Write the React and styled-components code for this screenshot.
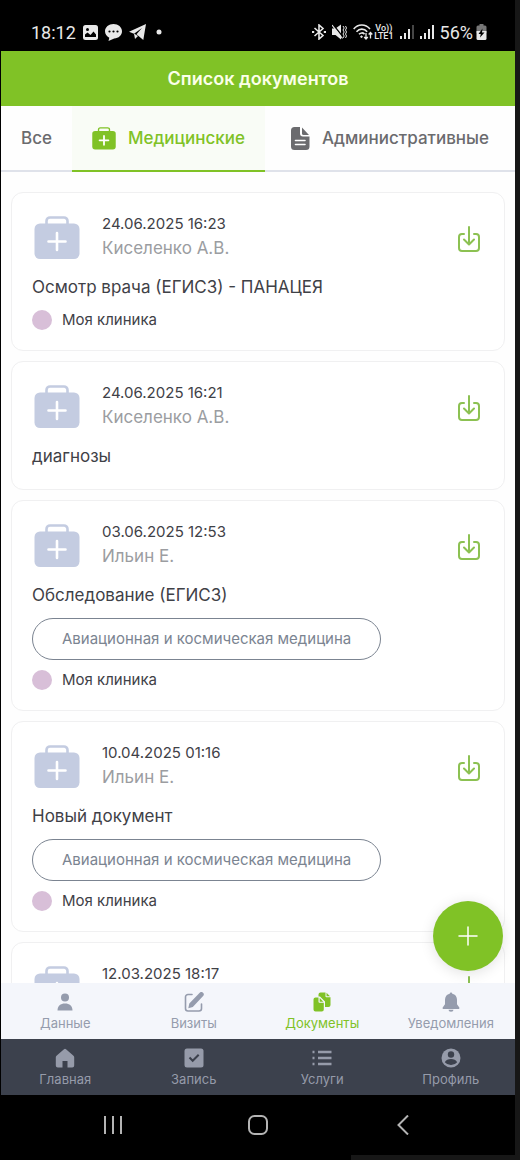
import React, { useState } from 'react'
import styled, { createGlobalStyle, ThemeProvider } from 'styled-components'

const theme = {
  colors: {
    green: '#80c226',
    ink: '#3f4147',
    grey: '#6b6b6e',
    muted: '#9b9da1',
    slate: '#7b8491',
    icon: '#c4cce1',
    line: '#f0f0f1',
    dark: '#3c414d',
    pale: '#f4f6fb',
  },
  font: "Inter, 'Liberation Sans', sans-serif",
}

const GlobalStyle = createGlobalStyle`
  * {
    box-sizing: border-box;
  }

  body {
    margin: 0;
    background: #171717;
    font-family: ${theme.font};
    color: ${theme.colors.ink};
  }

  button {
    font: inherit;
    color: inherit;
    background: none;
    border: 0;
    padding: 0;
    cursor: pointer;
  }

  svg {
    display: block;
    flex: none;
  }
`

const Screen = styled.div`
  display: flex;
  flex-direction: column;
  height: 100vh;
  margin-right: 5px;
  border-left: 1px solid #000;
  background: #fefefe;
`

const StatusBar = styled.div`
  display: flex;
  align-items: center;
  justify-content: space-between;
  flex: none;
  height: 51px;
  padding: 13px 28px 0 30px;
  background: #000;
  color: #e8e8e8;
  font-family: Roboto, sans-serif;
  font-size: 18px;
`

const StatusGroup = styled.div`
  display: flex;
  align-items: center;
  gap: ${({ $gap }) => $gap}px;
`

const Volte = styled.span`
  display: flex;
  flex-direction: column;
  align-items: center;
  font-size: 9px;
  font-weight: 500;
  line-height: 8px;
`

const Header = styled.header`
  display: flex;
  align-items: center;
  justify-content: center;
  flex: none;
  height: 55px;
  background: ${({ theme }) => theme.colors.green};
  color: #fbffe9;
`

const Title = styled.h1`
  margin: 0;
  font-size: 18px;
  font-weight: 600;
`

const Tabs = styled.div`
  display: flex;
  flex: none;
  height: 66px;
`

const Tab = styled.button`
  && {
    display: flex;
    align-items: center;
    justify-content: center;
    gap: 12px;
    padding: 0 20px;
    border-bottom: 2px solid ${({ $active, theme }) => ($active ? theme.colors.green : '#dfe2ea')};
    background: ${({ $active }) => ($active ? '#f9fcf6' : 'transparent')};
    color: ${({ $active, theme }) => ($active ? theme.colors.green : theme.colors.grey)};
    font-size: 17px;
    font-weight: 500;
    white-space: nowrap;
  }

  &&:last-child {
    flex: 1;
  }
`

const Content = styled.main`
  position: relative;
  flex: 1;
  min-height: 0;
`

const List = styled.div`
  display: flex;
  flex-direction: column;
  gap: 10px;
  height: 100%;
  padding: 20px 10px;
  overflow-y: auto;
  scrollbar-width: none;
`

const Card = styled.article`
  flex: none;
  padding: 19px 20px 20px;
  border: 1px solid ${({ theme }) => theme.colors.line};
  border-radius: 12px;
  background: #fff;
`

const CardHead = styled.div`
  display: flex;
  align-items: flex-end;
  gap: 22px;
  padding: 0 4px 0 2px;
`

const CardInfo = styled.div`
  flex: 1;
  min-height: 48px;
  font-size: 15px;
  line-height: 24px;
`

const Doctor = styled.div`
  color: ${({ theme }) => theme.colors.muted};
  font-size: 17px;
`

const DownloadButton = styled.button`
  && {
    padding-bottom: 8px;
  }
`

const CardTitle = styled.h2`
  margin: 14px 0 0;
  font-size: 17px;
  font-weight: 400;
  line-height: 26px;
`

const Tag = styled.div`
  width: fit-content;
  margin-top: 10px;
  padding: 0 29px;
  border: 1px solid ${({ theme }) => theme.colors.slate};
  border-radius: 21px;
  color: ${({ theme }) => theme.colors.slate};
  font-size: 15px;
  line-height: 40px;
`

const Clinic = styled.div`
  display: flex;
  align-items: center;
  gap: 10px;
  margin-top: 10px;
  font-size: 15px;
  line-height: 20px;

  &::before {
    content: '';
    width: 20px;
    height: 20px;
    border-radius: 50%;
    background: #d8bfd8;
  }
`

const Fab = styled.button`
  && {
    position: absolute;
    right: 12px;
    bottom: 12px;
    display: flex;
    align-items: center;
    justify-content: center;
    width: 70px;
    height: 70px;
    border-radius: 50%;
    background: ${({ theme }) => theme.colors.green};
    box-shadow: 0 2px 14px rgba(0, 0, 0, 0.12);
    color: #fff;
  }
`

const Nav = styled.nav`
  display: grid;
  grid-template-columns: repeat(4, 1fr);
  flex: none;
  height: 56px;
  background: ${({ $dark, theme }) => ($dark ? theme.colors.dark : theme.colors.pale)};
`

const NavItem = styled.a`
  display: flex;
  flex-direction: column;
  align-items: center;
  justify-content: center;
  gap: 3px;
  color: ${({ $active, $dark, theme }) =>
    $active ? theme.colors.green : $dark ? '#969baa' : '#959cad'};
  font-size: 13px;
  line-height: 16px;
  text-decoration: none;
`

const SystemBar = styled.div`
  display: flex;
  align-items: center;
  justify-content: space-around;
  flex: none;
  height: 60px;
  padding: 0 40px;
  background: #000;
  color: #b4b4b4;
`

const BottomEdge = styled.div`
  flex: none;
  height: 5px;
  background: linear-gradient(90deg, #000 68%, #171717 68%);
`

const MedKit = ({ width = 46, height = 44, color = 'currentColor', plus = 2.6 }) => (
  <svg width={width} height={height} viewBox="0 0 46 44" fill="none">
    <path d="M12.500 8V5a3.500 3.500 0 0 1 3.500-3.500h14A3.500 3.500 0 0 1 33.500 5v3" stroke={color} strokeWidth="2.600" />
    <rect x=".5" y="7.500" width="45" height="35.500" rx="5.500" fill={color} />
    <path d="M23 17v17M14.500 25.500h17" stroke="#fff" strokeWidth={plus} strokeLinecap="round" />
  </svg>
)

const FileIcon = () => (
  <svg width="19" height="23" viewBox="0 0 19 23">
    <path fill="currentColor" d="M3.500 0H9v6.500A3 3 0 0 0 12 9.500h6.500v10a3.500 3.500 0 0 1-3.500 3.500H3.500A3.500 3.500 0 0 1 0 19.500v-16A3.500 3.500 0 0 1 3.500 0z" />
    <path fill="currentColor" d="M11 .6 18 8h-5.500A1.500 1.500 0 0 1 11 6.500z" />
    <path stroke="#fff" strokeWidth="1.600" strokeLinecap="round" d="M4.500 13.500h9.500M4.500 17.500h9.500" />
  </svg>
)

const DownloadIcon = () => (
  <svg width="22" height="26" viewBox="0 0 22 26" fill="none" stroke="#8cc152" strokeWidth="2" strokeLinecap="round" strokeLinejoin="round">
    <path d="M6 8H4a3 3 0 0 0-3 3v11a3 3 0 0 0 3 3h14a3 3 0 0 0 3-3V11a3 3 0 0 0-3-3h-2" />
    <path d="M11 1v17M6 13.500l5 5 5-5" />
  </svg>
)

const PictureIcon = () => (
  <svg width="15" height="15" viewBox="0 0 15 15">
    <rect width="15" height="15" rx="2.500" fill="currentColor" />
    <circle cx="4.500" cy="4.500" r="1.500" fill="#000" />
    <path d="M2 12V9.500l2.500-2 3 2.500 3-3.500L13 9.500V12z" fill="#000" />
  </svg>
)

const ChatIcon = () => (
  <svg width="17" height="17" viewBox="0 0 17 17">
    <path fill="currentColor" d="M8.500 0c4.700 0 8.500 3.200 8.500 7.300 0 4-3.400 7-7.800 7.300L3.500 17l.8-3.200C1.700 12.500 0 10.100 0 7.300 0 3.200 3.800 0 8.500 0z" />
    <g fill="#000">
      <circle cx="4.500" cy="7.500" r="1.100" />
      <circle cx="8.500" cy="7.500" r="1.100" />
      <circle cx="12.500" cy="7.500" r="1.100" />
    </g>
  </svg>
)

const PlaneIcon = () => (
  <svg width="17" height="16" viewBox="0 0 17 16">
    <path fill="currentColor" d="M17 0 0 7.800l5 1.900L13 4 7.500 10.300 14.300 16z" />
    <path fill="currentColor" d="m5 9.500 1 5.500L9 12z" />
  </svg>
)

const DotIcon = () => (
  <svg width="10" height="6" viewBox="0 0 10 6">
    <circle cx="6" cy="3" r="2.500" fill="currentColor" />
  </svg>
)

const BluetoothIcon = () => (
  <svg width="14" height="16" viewBox="0 0 14 16" fill="none" stroke="currentColor" strokeWidth="1.600">
    <path d="m2.500 4 8.500 7.500L7 15V1l4 3.500L2.500 12" />
    <path d="M0 8h2.200M11.800 8H14" strokeWidth="2" />
  </svg>
)

const MuteIcon = () => (
  <svg width="15" height="16" viewBox="0 0 15 16">
    <path fill="currentColor" d="M0 4.500h3.500L9 .5v15l-5.500-4.500H0z" />
    <path d="M1 .5 11 13" stroke="#000" strokeWidth="1.300" />
    <path d="m0 1 10.500 13.500" stroke="currentColor" strokeWidth="1.200" />
    <path d="m11 2 1.200 2L11 6l1.200 2L11 10l1.200 2-1.200 2M13.500 2l1 2-1 2 1 2-1 2 1 2-1 2" fill="none" stroke="currentColor" />
  </svg>
)

const WifiIcon = () => (
  <svg width="20" height="16" viewBox="0 0 20 16" fill="none" stroke="currentColor">
    <path strokeWidth="1.600" d="M.7 5C5-.3 12.500-.3 17 5M3.500 7.700c3-3.400 7.700-3.400 10.700 0M6 10.300c1.700-1.800 4-1.800 5.500-.2" />
    <circle cx="8.500" cy="12.700" r=".8" fill="currentColor" />
    <path strokeWidth="1.300" d="M13 9v6m-1.800-2 1.800 2 1.800-2M17.500 14.500v-6m-1.800 2 1.800-2 1.800 2" />
  </svg>
)

const SignalIcon = ({ dim }) => (
  <svg width="14" height="14" viewBox="0 0 14 14" fill="currentColor">
    <path d="M0 11h2v3H0zM4 8h2v6H4zM8 4h2v10H8z" />
    <path d="M12 0h2v14h-2z" opacity={dim ? 0.3 : 1} />
  </svg>
)

const BatteryIcon = () => (
  <svg width="11" height="16" viewBox="0 0 11 16">
    <path fill="#777" d="M3.500 0h4v1.500H9a1.500 1.500 0 0 1 1.500 1.500v6H.5V3A1.500 1.500 0 0 1 2 1.500h1.500z" />
    <path fill="currentColor" d="M.5 7h10v7.500A1.500 1.500 0 0 1 9 16H2a1.500 1.500 0 0 1-1.500-1.500z" />
    <path fill="#000" d="M6.500 4.500 2.500 10h2.300L4 13.500 8.500 8.500H6z" />
  </svg>
)

const PlusIcon = () => (
  <svg width="20" height="20" viewBox="0 0 20 20" stroke="currentColor" strokeWidth="1.500" strokeLinecap="round">
    <path d="M10 1v18M1 10h18" />
  </svg>
)

const navIcons = {
  person: (
    <g fill="currentColor">
      <circle cx="10" cy="5.500" r="4" />
      <path d="M2.500 18.500c0-4.500 3-7 7.500-7s7.500 2.500 7.500 7z" />
    </g>
  ),
  edit: (
    <g fill="none" stroke="currentColor">
      <path strokeWidth="1.600" strokeLinecap="round" d="M8 2.500H4A2.500 2.500 0 0 0 1.500 5v11.500A2.500 2.500 0 0 0 4 19h11a2.500 2.500 0 0 0 2.500-2.500V12" />
      <path fill="currentColor" stroke="none" d="M15.700.8a2.300 2.300 0 0 1 3.400 3.200L8.800 15 4.300 16.200l1-4.600z" />
    </g>
  ),
  docs: (
    <g fill="currentColor">
      <path d="M8.500.5h5v3.800a1 1 0 0 0 1 1h4V13a2 2 0 0 1-2 2h-3.500V9.500L8 4.500H6.500V2.500a2 2 0 0 1 2-2z" />
      <path d="m14.500.8 3.500 3.500h-3.500z" />
      <path d="M3.500 5.500h3v4.300a1 1 0 0 0 1 1h4.300v6.700a2 2 0 0 1-2 2H3.500a2 2 0 0 1-2-2v-10a2 2 0 0 1 2-2z" />
      <path d="m7.700 6 3.600 3.700H7.700z" />
    </g>
  ),
  bell: (
    <g fill="currentColor">
      <path d="M8.700 1.800a1.300 1.300 0 0 1 2.600 0c3 .6 4.700 3 4.700 6v4.500l2.300 3.200c.4.800 0 1.500-.9 1.500H2.600c-.9 0-1.300-.7-.9-1.500L4 12.300V7.800c0-3 1.700-5.400 4.700-6z" />
      <path d="M7.500 17.800h5a2.500 2 0 0 1-5 0z" />
    </g>
  ),
  home: (
    <path fill="currentColor" d="M9 1.200a1.500 1.500 0 0 1 2 0l7.500 6.600a2 2 0 0 1 .7 1.500v8.200a2 2 0 0 1-2 2h-4.700V13H7.500v6.500H2.800a2 2 0 0 1-2-2V9.300a2 2 0 0 1 .7-1.500z" />
  ),
  check: (
    <>
      <rect x=".5" y=".5" width="19" height="19" rx="2.500" fill="currentColor" />
      <path d="m5.500 9.500 3.200 3.300 6-6" fill="none" stroke="#3c414d" strokeWidth="2" />
    </>
  ),
  list: (
    <path fill="none" stroke="currentColor" strokeWidth="2.300" d="M.5 4h2M.5 10h2M.5 16h2M6 4h13.500M6 10h13.500M6 16h13.500" />
  ),
  profile: (
    <>
      <circle cx="10" cy="10" r="9.500" fill="currentColor" />
      <circle cx="10" cy="6.500" r="3.200" fill="#3c414d" />
      <path d="M3.800 14.200c1.200-2.300 3.400-3.200 6.200-3.200s5 .9 6.200 3.200A8 8 0 0 1 10 17a8 8 0 0 1-6.200-2.800z" fill="#3c414d" />
    </>
  ),
}

const documents = [
  { date: '24.06.2025 16:23', doctor: 'Киселенко А.В.', title: 'Осмотр врача (ЕГИСЗ) - ПАНАЦЕЯ', clinic: 'Моя клиника' },
  { date: '24.06.2025 16:21', doctor: 'Киселенко А.В.', title: 'диагнозы' },
  { date: '03.06.2025 12:53', doctor: 'Ильин Е.', title: 'Обследование (ЕГИСЗ)', tag: 'Авиационная и космическая медицина', clinic: 'Моя клиника' },
  { date: '10.04.2025 01:16', doctor: 'Ильин Е.', title: 'Новый документ', tag: 'Авиационная и космическая медицина', clinic: 'Моя клиника' },
  { date: '12.03.2025 18:17' },
]

const sectionLinks = [
  { icon: 'person', label: 'Данные' },
  { icon: 'edit', label: 'Визиты' },
  { icon: 'docs', label: 'Документы', active: true },
  { icon: 'bell', label: 'Уведомления' },
]

const mainLinks = [
  { icon: 'home', label: 'Главная' },
  { icon: 'check', label: 'Запись' },
  { icon: 'list', label: 'Услуги' },
  { icon: 'profile', label: 'Профиль' },
]

const tabs = [
  { id: 'all', label: 'Все' },
  { id: 'medical', label: 'Медицинские', icon: <MedKit width={24} height={23} plus={3.4} /> },
  { id: 'admin', label: 'Административные', icon: <FileIcon /> },
]

const DocumentCard = ({ date, doctor, title, tag, clinic }) => (
  <Card>
    <CardHead>
      <MedKit color={theme.colors.icon} />
      <CardInfo>
        <div>{date}</div>
        {doctor && <Doctor>{doctor}</Doctor>}
      </CardInfo>
      <DownloadButton aria-label="Скачать">
        <DownloadIcon />
      </DownloadButton>
    </CardHead>
    {title && <CardTitle>{title}</CardTitle>}
    {tag && <Tag>{tag}</Tag>}
    {clinic && <Clinic>{clinic}</Clinic>}
  </Card>
)

const BottomNav = ({ links, dark }) => (
  <Nav $dark={dark}>
    {links.map(({ icon, label, active }) => (
      <NavItem key={label} href="#" $active={active} $dark={dark}>
        <svg width="20" height="20" viewBox="0 0 20 20">{navIcons[icon]}</svg>
        {label}
      </NavItem>
    ))}
  </Nav>
)

const App = () => {
  const [tab, setTab] = useState('medical')

  return (
    <ThemeProvider theme={theme}>
      <GlobalStyle />
      <Screen>
        <StatusBar>
          <StatusGroup $gap={7}>
            <span>18:12</span>
            <PictureIcon />
            <ChatIcon />
            <PlaneIcon />
            <DotIcon />
          </StatusGroup>
          <StatusGroup $gap={6}>
            <BluetoothIcon />
            <MuteIcon />
            <StatusGroup $gap={1}>
              <WifiIcon />
              <Volte>
                <span>Vo))</span>
                <span>LTE1</span>
              </Volte>
            </StatusGroup>
            <SignalIcon dim />
            <SignalIcon />
            <StatusGroup $gap={3}>
              56%
              <BatteryIcon />
            </StatusGroup>
          </StatusGroup>
        </StatusBar>
        <Header>
          <Title>Список документов</Title>
        </Header>
        <Tabs role="tablist">
          {tabs.map(({ id, label, icon }) => (
            <Tab key={id} role="tab" aria-selected={tab === id} $active={tab === id} onClick={() => setTab(id)}>
              {icon}
              {label}
            </Tab>
          ))}
        </Tabs>
        <Content>
          <List>
            {documents.map((doc) => (
              <DocumentCard key={doc.date} {...doc} />
            ))}
          </List>
          <Fab aria-label="Добавить">
            <PlusIcon />
          </Fab>
        </Content>
        <BottomNav links={sectionLinks} />
        <BottomNav links={mainLinks} dark />
        <SystemBar>
          <button aria-label="Недавние">
            <svg width="20" height="20" viewBox="0 0 20 20" stroke="currentColor" strokeWidth="2">
              <path d="M2 1v18M10 1v18M18 1v18" />
            </svg>
          </button>
          <button aria-label="Домой">
            <svg width="20" height="20" viewBox="0 0 20 20" fill="none" stroke="currentColor" strokeWidth="2">
              <rect x="1" y="1" width="18" height="18" rx="5.500" />
            </svg>
          </button>
          <button aria-label="Назад">
            <svg width="20" height="20" viewBox="0 0 20 20" fill="none" stroke="currentColor" strokeWidth="2">
              <path d="M15 .5 5.500 10l9.500 9.500" />
            </svg>
          </button>
        </SystemBar>
        <BottomEdge />
      </Screen>
    </ThemeProvider>
  )
}

export default App
